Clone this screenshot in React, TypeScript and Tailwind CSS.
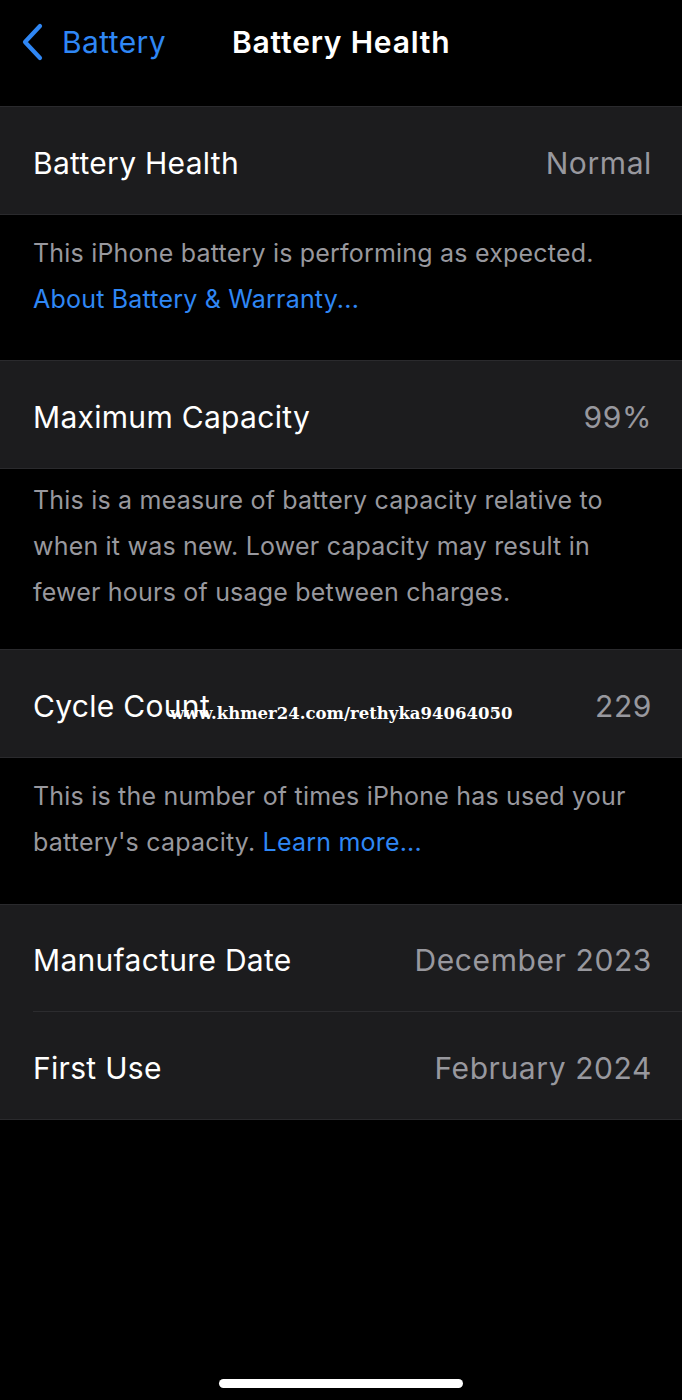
import React from 'react';

type Row = { label: string; value: string };

const BLUE = 'text-[#2f87f5]';

function Group({ rows, children }: { rows: Row[]; children?: React.ReactNode }) {
  return (
    <div className="relative bg-[#1c1c1e] border-y border-[#2a2a2d]">
      {rows.map((r, i) => (
        <div key={r.label} className="pl-[33px]">
          <div
            className={`flex h-[107px] items-center justify-between pt-[5px] pr-[31px] ${
              i < rows.length - 1 ? 'border-b border-[#2c2c2f]' : ''
            }`}
          >
            <span className="tracking-[0.3px] text-white">{r.label}</span>
            <span className="-mr-[1px] tracking-[0.6px] text-[#98989e]">{r.value}</span>
          </div>
        </div>
      ))}
      {children}
    </div>
  );
}

export default function App() {
  return (
    <div
      className="relative flex min-h-[1400px] w-[682px] flex-col bg-black text-[30px]"
      style={{ fontFamily: 'Inter, Roboto, "Liberation Sans", sans-serif' }}
    >
      {/* nav bar */}
      <div className="relative flex h-[84px] items-center">
        <div className={`flex items-center gap-[18px] pl-[20px] tracking-[0.4px] ${BLUE}`}>
          <svg width="24" height="38" viewBox="0 0 24 38" fill="none">
            <path d="M20 3 L5 19 L20 35" stroke="#2f87f5" strokeWidth="4.2" strokeLinecap="round" strokeLinejoin="round" />
          </svg>
          <span>Battery</span>
        </div>
        <div className="absolute left-[232px] font-semibold tracking-[0.8px] text-white">Battery Health</div>
      </div>

      <div className="mt-[22px]">
        <Group rows={[{ label: 'Battery Health', value: 'Normal' }]} />
        <div className="px-[33px] pt-[15px] pb-[38px] text-[25px] leading-[46px] tracking-[0.2px] text-[#98989e]">
          <p>This iPhone battery is performing as expected.</p>
          <p className={BLUE}>About Battery &amp; Warranty...</p>
        </div>

        <Group rows={[{ label: 'Maximum Capacity', value: '99%' }]} />
        <div className="px-[33px] pt-[8px] pb-[34px] text-[25px] leading-[46px] tracking-[0.2px] text-[#98989e]">
          <p>This is a measure of battery capacity relative to</p>
          <p>when it was new. Lower capacity may result in</p>
          <p>fewer hours of usage between charges.</p>
        </div>

        <Group rows={[{ label: 'Cycle Count', value: '229' }]}>
          {/* watermark over the row */}
          <div
            className="absolute left-[170px] top-[52px] text-[16.5px] font-bold tracking-normal text-white"
            style={{ fontFamily: '"DejaVu Serif", "Liberation Serif", serif' }}
          >
            www.khmer24.com/rethyka94064050
          </div>
        </Group>
        <div className="px-[33px] pt-[15px] pb-[39px] text-[25px] leading-[46px] tracking-[0.2px] text-[#98989e]">
          <p>This is the number of times iPhone has used your</p>
          <p>
            battery's capacity. <span className={BLUE}>Learn more...</span>
          </p>
        </div>

        <Group
          rows={[
            { label: 'Manufacture Date', value: 'December 2023' },
            { label: 'First Use', value: 'February 2024' },
          ]}
        />
      </div>

      {/* home indicator */}
      <div className="mt-auto flex justify-center pb-[12px]">
        <div className="h-[9px] w-[244px] rounded-full bg-white" />
      </div>
    </div>
  );
}
